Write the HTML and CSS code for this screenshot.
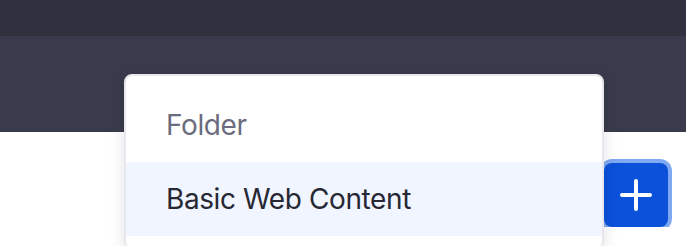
FILE: index.html
```html
<!DOCTYPE html>
<html lang="en">

<head>
    <meta charset="UTF-8">
    <meta name="viewport" content="width=device-width, initial-scale=1">
    <title>Add content</title>
    <link rel="stylesheet" href="styles.css">
</head>

<body>
    <div class="topbar"></div>
    <div class="navbar"></div>

    <div class="content">
        <button class="add-btn" type="button" aria-label="Add">
            <svg width="32" height="32" viewBox="0 0 32 32">
                <path d="M16 2 V30 M2 16 H30" stroke="#fff" stroke-width="4" stroke-linecap="round" fill="none"/>
            </svg>
        </button>
    </div>

    <ul class="dropdown">
        <li class="dropdown-item">Folder</li>
        <li class="dropdown-item active">Basic Web Content</li>
    </ul>
</body>
</html>
```

FILE: styles.css
```css
body {
    margin: 0;
    font-family: Inter, "Noto Sans", sans-serif;
    background-color: #fff;
    overflow: hidden;
}

.topbar {
    height: 36px;
    background-color: #30313f;
}

.navbar {
    height: 96px;
    background-color: #393a4b;
}

.content {
    display: flex;
    justify-content: flex-end;
    padding: 31px 18px 0 0;
}

.add-btn {
    width: 64px;
    height: 64px;
    padding: 0;
    border: none;
    border-radius: 8px;
    background-color: #0b51da;
    box-shadow: 0 0 0 4px #80a9f3;
    display: flex;
    align-items: center;
    justify-content: center;
    cursor: pointer;
}

.dropdown {
    position: absolute;
    top: 74px;
    left: 124px;
    width: 476px;
    margin: 0;
    padding: 12px 0;
    list-style: none;
    background-color: #fff;
    border: 2px solid #e7e7ed;
    border-radius: 8px;
    box-shadow: 0 4px 16px rgba(0, 0, 0, 0.12);
}

.dropdown-item {
    padding: 16px 40px;
    font-size: 28px;
    line-height: 42px;
    letter-spacing: -0.4px;
    color: #272833;
}

.dropdown-item:first-child {
    color: #6b6c7e;
}

.dropdown-item.active {
    background-color: #f0f5ff;
}
```
